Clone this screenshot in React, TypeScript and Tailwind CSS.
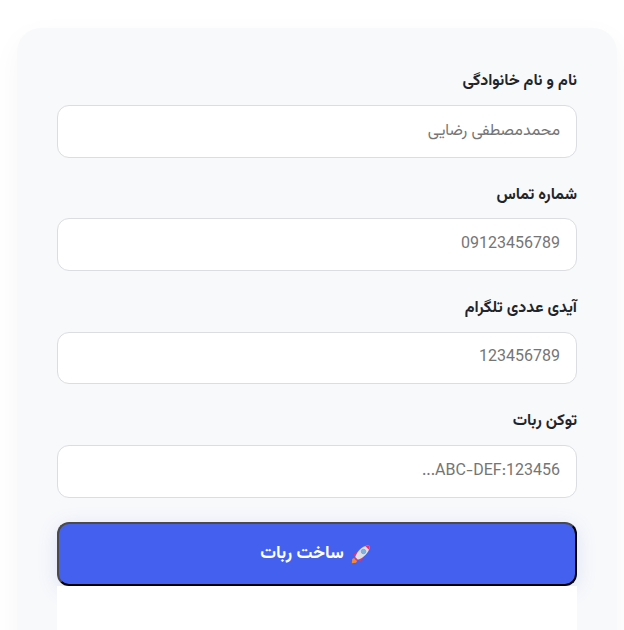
const fields = [
  { label: "نام و نام خانوادگی", placeholder: "محمدمصطفی رضایی" },
  { label: "شماره تماس", placeholder: "09123456789" },
  { label: "آیدی عددی تلگرام", placeholder: "123456789" },
  { label: "توکن ربات", placeholder: "123456:ABC-DEF..." },
];

function Rocket() {
  return (
    <svg viewBox="0 0 24 24" className="h-[20px] w-[20px]">
      <path d="M1 23 L1.5 18 L4 16.5 L7.5 20 L6 22.5z" fill="#f5882a" />
      <path d="M3 13 L8 9 L11 10 L6 16z M11 21 L15 16 L14 13 L8 18z" fill="#ee2f6f" />
      <path d="M5 16 C7 9 13 3 20 1.5 C21.5 1.5 22.5 2.5 22.5 4 C21 11 15 17 8 19z" fill="#dfe0e6" />
      <path d="M17 2.4 C18.5 1.8 19.5 1.5 20.5 1.5 C21.7 1.6 22.4 2.4 22.5 3.5 C22.4 4.5 22.2 5.5 21.6 7z" fill="#ee2f6f" />
      <path d="M5 16 L8 19 L6.5 20 L4 17.5z" fill="#ee2f6f" />
      <circle cx="15" cy="9" r="2.7" fill="#7db4e6" stroke="#8d97a8" strokeWidth="0.9" />
    </svg>
  );
}

export default function App() {
  return (
    <div dir="rtl" className="h-[630px] overflow-hidden bg-white pt-[28.2px] font-['Vazirmatn','Roboto',sans-serif]">
      <div className="mr-[7px] w-[600px] rounded-[24px] bg-[#f8f9fb] px-10 pt-10 pb-10 shadow-[0_10px_30px_rgba(0,0,0,0.04)]">
        <form>
          {fields.map((f) => (
            <div key={f.label} className="mb-6">
              <label className="mb-[9px] block text-[16px] font-bold leading-[27.6px] text-[#212529]">{f.label}</label>
              <input
                placeholder={f.placeholder}
                className="h-[52.8px] w-full rounded-[12px] border border-[#dcdde1] bg-white px-4 text-[16px] placeholder:text-[#757575] focus:outline-none"
              />
            </div>
          ))}
          <button
            type="button"
            className="flex h-[64px] w-full items-center justify-center gap-[7px] rounded-[12px] border-2 border-t-[#4a4a4a] border-r-black border-b-black border-l-[#4a4a4a] bg-[#4361ee] pr-[3px] text-[17.6px] font-bold text-white shadow-[0_4px_20px_rgba(67,97,238,0.15)]"
          >
            <Rocket />
            <span>ساخت ربات</span>
          </button>
          <div className="relative h-[60px] bg-white" />
        </form>
      </div>
    </div>
  );
}
